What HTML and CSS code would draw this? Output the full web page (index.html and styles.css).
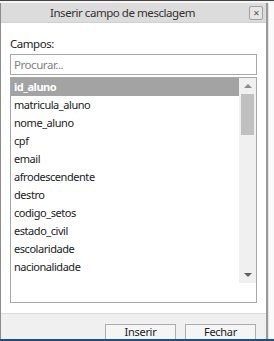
FILE: index.html
```html
<!DOCTYPE html>
<html lang="pt">
<head>
    <meta charset="UTF-8">
    <title>Inserir campo de mesclagem</title>
    <link rel="stylesheet" href="styles.css">
</head>
<body>
    <div class="backdrop-top"></div>
    <div class="screen">
        <div class="dialog">
            <div class="dialog-title">
                <span class="title-text">Inserir campo de mesclagem</span>
                <span class="close-btn">&#x2715;</span>
            </div>
            <div class="dialog-body">
                <label class="field-label">Campos:</label>
                <div class="search-box">Procurar...</div>
                <div class="list-box">
                    <div class="list-items">
                        <div class="item selected">id_aluno</div>
                        <div class="item">matricula_aluno</div>
                        <div class="item">nome_aluno</div>
                        <div class="item">cpf</div>
                        <div class="item">email</div>
                        <div class="item">afrodescendente</div>
                        <div class="item">destro</div>
                        <div class="item">codigo_setos</div>
                        <div class="item">estado_civil</div>
                        <div class="item">escolaridade</div>
                        <div class="item">nacionalidade</div>
                    </div>
                    <div class="scrollbar">
                        <div class="arrow up"></div>
                        <div class="track"><div class="thumb"></div></div>
                        <div class="arrow down"></div>
                    </div>
                </div>
            </div>
            <div class="dialog-footer">
                <button class="btn">Inserir</button>
                <button class="btn">Fechar</button>
            </div>
        </div>
        <div class="side"></div>
    </div>
    <div class="taskbar"></div>
</body>
</html>
```

FILE: styles.css
```css
html, body {
    margin: 0;
    padding: 0;
    height: 341px;
    overflow: hidden;
    background: #ffffff;
    font-family: "Noto Sans", "Open Sans", sans-serif;
    font-size: 11px;
    letter-spacing: -0.45px;
    color: #222;
}

.backdrop-top {
    height: 3px;
    background: #f4f4f4;
    border-top: 1px solid #444;
    box-sizing: border-box;
}

.screen {
    display: flex;
    height: 336px;
}

.dialog {
    width: 265px;
    border-left: 1px solid #8c8c8c;
    border-right: 2px solid #9a9a9a;
    display: flex;
    flex-direction: column;
    background: #fff;
    overflow: hidden;
}

.side {
    flex: 1;
    background: #fafafa;
    border-left: 1px solid #e4e4e4;
}

.dialog-title {
    height: 19px;
    flex-shrink: 0;
    background: #dcdcdc;
    position: relative;
    display: flex;
    align-items: center;
    justify-content: center;
    border-bottom: 1px solid #d0d0d0;
}

.title-text {
    font-size: 11.5px;
    color: #333;
    margin-left: -22px;
}

.close-btn {
    position: absolute;
    right: 3px;
    top: 3px;
    width: 12px;
    height: 12px;
    border: 1px solid #a0a0a0;
    border-radius: 2px;
    background: #e6e6e6;
    font-size: 8px;
    line-height: 12px;
    letter-spacing: 0;
    text-align: center;
    color: #555;
}

.dialog-body {
    padding: 13px 9px 0 9px;
    flex-shrink: 0;
    height: 277px;
}

.field-label {
    display: block;
    font-size: 11.5px;
    line-height: 16px;
    margin-bottom: 2px;
}

.search-box {
    height: 19px;
    border: 1px solid #a8a8a8;
    padding-left: 3px;
    line-height: 19px;
    color: #808080;
    font-size: 11.5px;
    margin-bottom: 2px;
}

.list-box {
    height: 224px;
    border: 1px solid #a8a8a8;
    display: flex;
    align-items: flex-start;
}

.list-items {
    flex: 1;
}

.item {
    height: 18px;
    line-height: 18px;
    padding-left: 3px;
    font-size: 11px;
    color: #222;
}

.item.selected {
    background: #a3a3a3;
    color: #fff;
    font-weight: bold;
}

.scrollbar {
    width: 17px;
    height: 205px;
    background: #f0f0f0;
    display: flex;
    flex-direction: column;
}

.arrow {
    height: 16px;
    display: flex;
    align-items: center;
    justify-content: center;
}

.arrow::after {
    content: "";
    border-left: 4px solid transparent;
    border-right: 4px solid transparent;
}

.arrow.up::after {
    border-bottom: 4px solid #8a8a8a;
}

.arrow.down::after {
    border-top: 4px solid #606060;
}

.track {
    flex: 1;
    padding: 0 2px;
}

.thumb {
    height: 41px;
    background: #c0c0c0;
}

.dialog-footer {
    flex: 1;
    background: #f0f0f0;
    border-top: 1px solid #dadada;
    display: flex;
    justify-content: flex-end;
    align-items: flex-start;
    gap: 9px;
    padding: 10px 10px 0 0;
}

.btn {
    width: 71px;
    height: 15px;
    flex-shrink: 0;
    border: 1px solid #adadad;
    border-bottom: none;
    background: #f5f5f5;
    font-family: "Noto Sans", sans-serif;
    font-size: 11px;
    line-height: 12px;
    letter-spacing: -0.3px;
    color: #222;
    padding: 0;
}

.taskbar {
    height: 2px;
    background: #1f4f7f;
}
```
